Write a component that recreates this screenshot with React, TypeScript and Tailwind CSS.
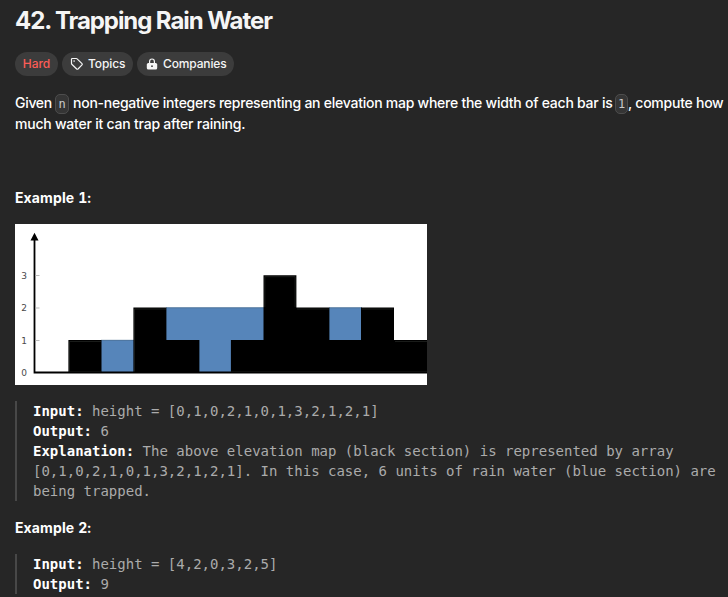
import type { ReactNode } from "react";

const SANS = "font-['Inter','Liberation_Sans',sans-serif]";
const MONO = "font-['DejaVu_Sans_Mono','Liberation_Mono',monospace]";

function Pill({ children, className = "" }: { children: ReactNode; className?: string }) {
  return (
    <div className={`flex h-6 items-center rounded-full bg-[#3c3c3c] text-xs whitespace-nowrap ${className}`}>
      {children}
    </div>
  );
}

function Code({ children, className = "" }: { children: ReactNode; className?: string }) {
  return (
    <code className={`${MONO} mt-0.5 inline-flex h-5 shrink-0 items-center justify-center rounded-[5px] border border-[#4d4d4d] bg-[#353535] text-xs leading-none tracking-normal text-[#cacaca] ${className}`}>
      {children}
    </code>
  );
}

function TagIcon() {
  return (
    <svg viewBox="0 0 14 14" className="h-[14px] w-[14px]" fill="none" stroke="#f5f5f5" strokeWidth="1.2" strokeLinejoin="round">
      <path d="M1.5 2.3a.8.8 0 0 1 .8-.8h4.1c.3 0 .5.1.7.3l4.9 4.8c.4.4.4.9 0 1.3l-4 4.1c-.4.3-.9.3-1.3 0L1.8 7.2a1 1 0 0 1-.3-.7z" />
      <circle cx="4.1" cy="4.1" r=".8" fill="#f5f5f5" stroke="none" />
    </svg>
  );
}

function LockIcon() {
  return (
    <svg viewBox="0 0 12 12" className="h-3 w-3">
      <path d="M3.6 5.5V3.4a2.4 2.4 0 0 1 4.8 0v2.1" fill="none" stroke="#f5f5f5" strokeWidth="1.2" />
      <rect x=".8" y="5" width="10.4" height="6.6" rx="1.5" fill="#f5f5f5" />
      <circle cx="6" cy="8.2" r=".9" fill="#3c3c3c" />
    </svg>
  );
}

function ElevationChart() {
  return (
    <svg viewBox="0 0 412 161" className="block h-[161px] w-[412px] bg-white">
      <g fill="#5685ba">
        <path d="M86 116h33v33H86zM151 83.5h98v65.5h-98zM314 83.5h33v33h-33z" />
      </g>
      <path d="M86 116.3h33M151 83.8h98M314 83.8h33" stroke="#4b7094" strokeWidth=".8" />
      <path d="M53.4 149v-33h33.1v33h31.9V83.5h33V116h33v33h31.5v-33h32.6V51.2h32.9v32.3h33V116h31.6V83.5h33V116h33v33z" fill="#000" />
      <path d="M54.5 148V117.5H86M119.5 148V85H151M249.8 83V52.7h30.3V83M282 85h32M347 85h31M380 117.5h32M54 147.5h32M216 147.5h196" fill="none" stroke="#2a2e2a" strokeWidth=".6" />
      <path d="M19.5 12v136.5H412" fill="none" stroke="#000" strokeWidth="1.8" />
      <path d="M19.5 8.7l4 7.7h-8z" fill="#000" />
      <path d="M20 51.5h4.5M20 84h4.5M20 116.5h4.5" stroke="#aaa" strokeWidth=".8" />
      <g className="font-['DejaVu_Sans',sans-serif] text-[9px]" fill="#4a4a4a" textAnchor="middle">
        <text x="9" y="54.5">3</text>
        <text x="9" y="87">2</text>
        <text x="9" y="119.5">1</text>
        <text x="9" y="152">0</text>
      </g>
    </svg>
  );
}

function Line({ label, children }: { label?: string; children: ReactNode }) {
  return (
    <div className="flex whitespace-pre">
      {label && <strong className="mr-[1ch] font-bold text-white">{label}</strong>}
      <span>{children}</span>
    </div>
  );
}

function Heading({ children, className = "" }: { children: ReactNode; className?: string }) {
  return (
    <h2 className={`text-sm leading-[21px] font-bold tabular-nums ${className}`}>
      {children}
    </h2>
  );
}

function ExampleBlock({ children }: { children: ReactNode }) {
  return (
    <div className={`${MONO} mt-4 border-l-2 border-[#484848] pl-4 text-sm leading-5 text-[#ababab]`}>
      {children}
    </div>
  );
}

export default function App() {
  return (
    <main className={`${SANS} h-[597px] w-[728px] overflow-hidden bg-[#262626] pl-[15px] text-white`}>
      <h1 className="pt-[5px] text-2xl leading-8 font-bold tracking-[-1.08px] whitespace-nowrap text-[#f5f5f5]">
        42. Trapping Rain Water
      </h1>

      <div className="mt-[15px] flex gap-1 text-[#f5f5f5]">
        <Pill className="w-[43px] justify-center font-medium text-[#fb5c57]">Hard</Pill>
        <Pill className="w-[71px] gap-1 pl-2 font-medium">
          <TagIcon />
          <span className="tracking-[-0.1px]">Topics</span>
        </Pill>
        <Pill className="w-[97px] gap-[5px] pl-[9px] font-medium">
          <LockIcon />
          <span className="tracking-[-0.15px]">Companies</span>
        </Pill>
      </div>

      <div className="mt-4 text-sm leading-[21px] font-medium whitespace-nowrap">
        <div className="flex h-[21px] items-center">
          <span className="w-10 tracking-[-0.3px]">Given</span>
          <Code className="w-[14px]">n</Code>
          <span className="ml-1 w-[542px] tracking-[-0.25px]">
            non-negative integers representing an elevation map where the width of each bar is
          </span>
          <Code className="w-[13px]">1</Code>
          <span className="tracking-[-0.25px]">, compute how</span>
        </div>
        <p className="tracking-[-0.22px]">much water it can trap after raining.</p>
      </div>

      <Heading className="mt-[53px] tracking-[0.12px]">Example 1:</Heading>
      <div className="mt-4">
        <ElevationChart />
      </div>

      <ExampleBlock>
        <Line label="Input:">height = [0,1,0,2,1,0,1,3,2,1,2,1]</Line>
        <Line label="Output:">6</Line>
        <Line label="Explanation:">The above elevation map (black section) is represented by array</Line>
        <Line>[0,1,0,2,1,0,1,3,2,1,2,1]. In this case, 6 units of rain water (blue section) are</Line>
        <Line>being trapped.</Line>
      </ExampleBlock>

      <Heading className="mt-4 tracking-[0.12px]">Example 2:</Heading>
      <ExampleBlock>
        <Line label="Input:">height = [4,2,0,3,2,5]</Line>
        <Line label="Output:">9</Line>
      </ExampleBlock>
    </main>
  );
}
